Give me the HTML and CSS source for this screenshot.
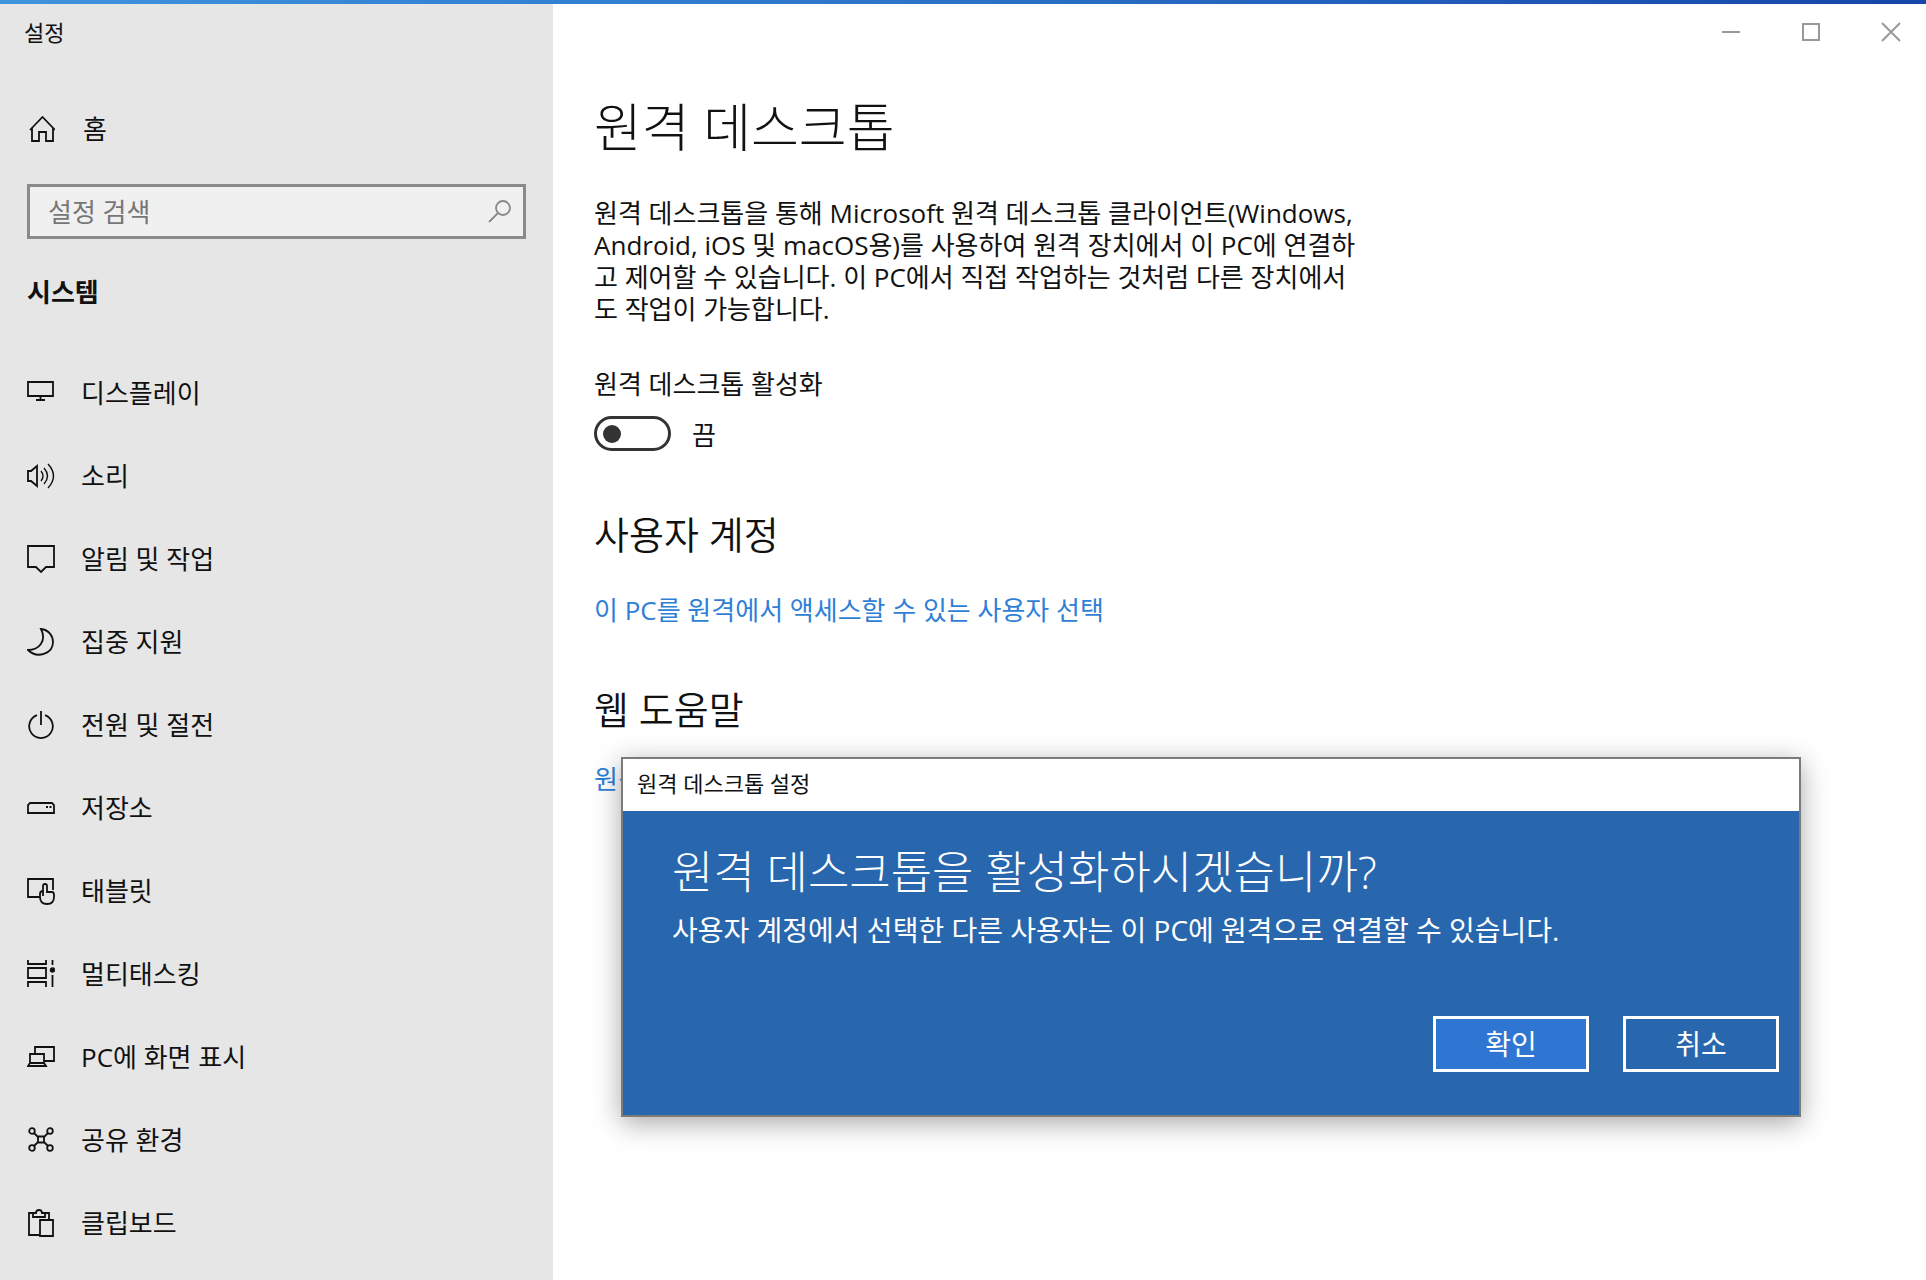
FILE: index.html
```html
<!DOCTYPE html>
<html lang="ko">
<head>
    <meta charset="UTF-8">
    <meta name="viewport" content="width=device-width, initial-scale=1.0">
    <title>설정</title>
    <link rel="stylesheet" href="styles.css">
</head>
<body>
    <div class="accent-strip"></div>
    <div class="window">
        <aside class="sidebar">
            <div class="window-title">설정</div>

            <div class="sidebar-body">
                <a href="#" class="home-link">
                    <svg class="icon" viewBox="0 0 28 28"><path d="M3 15L15.500 2L28 15M5 13V26H12V17H19V26H26V13"/></svg>
                    홈
                </a>

                <form class="search-box">
                    <input type="text" class="search-input" placeholder="설정 검색" aria-label="설정 검색">
                    <button type="button" class="search-btn" aria-label="검색">
                        <svg class="icon" viewBox="0 0 28 28"><circle cx="18" cy="10" r="7"/><path d="M13 15L4 24"/></svg>
                    </button>
                </form>

                <h2 class="sidebar-heading">시스템</h2>

                <nav class="nav">
                    <a href="#" class="nav-item">
                        <svg class="icon" viewBox="0 0 28 28"><path d="M1 3H26V17H1ZM13.500 17V21M9 21H18"/></svg>
                        디스플레이
                    </a>
                    <a href="#" class="nav-item">
                        <svg class="icon" viewBox="0 0 28 28"><path d="M1 9H4L10 4V24L4 19H1Z"/><path class="thin" d="M14 9Q18 14 14 19M17 6Q24 14 17 22M21 2Q32 14 21 26"/></svg>
                        소리
                    </a>
                    <a href="#" class="nav-item">
                        <svg class="icon" viewBox="0 0 28 28"><path d="M1 1H27V22H19L14 27L9 22H1Z"/></svg>
                        알림 및 작업
                    </a>
                    <a href="#" class="nav-item">
                        <svg class="icon" viewBox="0 0 28 28"><path d="M14 1C22 2 26 8 26 14C26 26 10 31 1 22C12 22 20 13 14 1Z"/></svg>
                        집중 지원
                    </a>
                    <a href="#" class="nav-item">
                        <svg class="icon" viewBox="0 0 28 28"><path d="M10 4.200A11.800 11.800 0 1 0 18 4.200M14 0V14"/></svg>
                        전원 및 절전
                    </a>
                    <a href="#" class="nav-item">
                        <svg class="icon" viewBox="0 0 28 28"><path d="M1 19V11L3 9H25L27 11V19Z"/><path d="M19 13H21M22.500 13H24.500"/></svg>
                        저장소
                    </a>
                    <a href="#" class="nav-item">
                        <svg class="icon" viewBox="0 0 28 28"><path d="M13 20H1V2H26V13"/><path d="M16 19V9Q16 7 18 7T20 9V15L25 15Q27 15 27 18V20Q27 27 20 27Q13 27 13 20V17Q13 14 16 14"/></svg>
                        태블릿
                    </a>
                    <a href="#" class="nav-item">
                        <svg class="icon" viewBox="0 0 28 28"><path d="M1 0V4H19V0M1 8H19V18H1ZM1 27V22H19V27M25.500 0V5M25.500 15V27"/><circle class="solid" cx="25.500" cy="10" r="1.800"/></svg>
                        멀티태스킹
                    </a>
                    <a href="#" class="nav-item">
                        <svg class="icon" viewBox="0 0 28 28"><path d="M8 11V4H27V18H17M3 11H17V20H3ZM3 20H17L19 23H1Z"/></svg>
                        PC에 화면 표시
                    </a>
                    <a href="#" class="nav-item">
                        <svg class="icon" viewBox="0 0 28 28"><circle cx="5" cy="5" r="2.800"/><circle cx="23" cy="5" r="2.800"/><circle cx="5" cy="22" r="2.800"/><circle cx="23" cy="22" r="2.800"/><path d="M11 10.500H17V16.500H11ZM7 7L11 11M21 7L17 11M7 20L11 16M21 20L17 16"/></svg>
                        공유 환경
                    </a>
                    <a href="#" class="nav-item">
                        <svg class="icon" viewBox="0 0 28 28"><path d="M13 26H2V4H8M16 4H22V10M6 4V8H18V4H15Q15 1 12 1T9 4H6M13 11H26V27H13Z"/></svg>
                        클립보드
                    </a>
                </nav>
            </div>
        </aside>

        <main class="content">
            <div class="window-controls">
                <button type="button" class="control-btn" aria-label="최소화">
                    <svg viewBox="0 0 20 20"><path d="M1 10H19"/></svg>
                </button>
                <button type="button" class="control-btn" aria-label="최대화">
                    <svg viewBox="0 0 20 20"><path d="M2 2H18V18H2Z"/></svg>
                </button>
                <button type="button" class="control-btn" aria-label="닫기">
                    <svg viewBox="0 0 20 20"><path d="M1 1L19 19M19 1L1 19"/></svg>
                </button>
            </div>

            <h1 class="page-title">원격 데스크톱</h1>
            <p class="description">
                원격 데스크톱을 통해 Microsoft 원격 데스크톱 클라이언트(Windows,<br>
                Android, iOS 및 macOS용)를 사용하여 원격 장치에서 이 PC에 연결하<br>
                고 제어할 수 있습니다. 이 PC에서 직접 작업하는 것처럼 다른 장치에서<br>
                도 작업이 가능합니다.
            </p>

            <label class="toggle-label" for="remote-toggle">원격 데스크톱 활성화</label>
            <div class="toggle-row">
                <input type="checkbox" class="toggle" id="remote-toggle">
                <span class="toggle-state">끔</span>
            </div>

            <h2 class="section-title">사용자 계정</h2>
            <a href="#" class="text-link">이 PC를 원격에서 액세스할 수 있는 사용자 선택</a>

            <h2 class="section-title help-title">웹 도움말</h2>
            <a href="#" class="text-link">원격 데스크톱 설정</a>

            <div class="dialog" role="dialog" aria-labelledby="dialog-heading">
                <div class="dialog-bar">원격 데스크톱 설정</div>
                <div class="dialog-body">
                    <h2 class="dialog-heading" id="dialog-heading">원격 데스크톱을 활성화하시겠습니까?</h2>
                    <p class="dialog-text">사용자 계정에서 선택한 다른 사용자는 이 PC에 원격으로 연결할 수 있습니다.</p>
                    <div class="dialog-actions">
                        <button type="button" class="btn btn-primary">확인</button>
                        <button type="button" class="btn">취소</button>
                    </div>
                </div>
            </div>
        </main>
    </div>
</body>
</html>
```
FILE: styles.css
```css
* {
    box-sizing: border-box;
}
body {
    margin: 0;
    min-height: 100vh;
    display: flex;
    flex-direction: column;
    background-color: #fff;
    color: #111;
    font-family: "Open Sans", "Noto Sans CJK KR", sans-serif;
    font-size: 26px;
    line-height: 32px;
}
h1, h2, p {
    margin: 0;
}
a {
    text-decoration: none;
}
button, input {
    font-family: inherit;
    font-size: inherit;
}
.accent-strip {
    height: 4px;
    background: linear-gradient(to right, #3f94de, #2b72c8 50%, #1546a8);
}
.window {
    flex: 1;
    display: grid;
    grid-template-columns: 553px 1fr;
}

/* Sidebar */
.sidebar {
    background-color: #e6e6e6;
}
.window-title {
    height: 58px;
    padding: 0 24px;
    line-height: 56px;
    font-size: 22px;
}
.sidebar-body {
    padding: 0 27px;
}
.icon {
    width: 28px;
    height: 28px;
    flex: none;
    fill: none;
    stroke: currentColor;
    stroke-width: 1.8;
}
.icon .thin {
    stroke-width: 1.4;
}
.icon .solid {
    fill: currentColor;
}
.home-link {
    display: flex;
    align-items: center;
    gap: 28px;
    height: 50px;
    margin-top: 42px;
    color: inherit;
}
.search-box {
    display: flex;
    align-items: center;
    height: 55px;
    margin-top: 30px;
    border: 3px solid #8a8a8a;
    background-color: #f0f0f0;
}
.search-input {
    flex: 1;
    min-width: 0;
    padding: 0 18px;
    border: none;
    outline: none;
    background: none;
}
.search-input::placeholder {
    color: #777;
    opacity: 1;
}
.search-btn {
    display: flex;
    padding: 0 10px;
    border: none;
    background: none;
    color: #888;
}
.sidebar-heading {
    margin-top: 33px;
    font-size: 26px;
    line-height: 40px;
}
.nav {
    margin-top: 39px;
}
.nav-item {
    display: flex;
    align-items: center;
    gap: 26px;
    height: 83px;
    color: inherit;
}

/* Content */
.content {
    position: relative;
    padding-left: 41px;
}
.window-controls {
    display: flex;
    justify-content: flex-end;
    gap: 10px;
    height: 56px;
}
.control-btn {
    display: flex;
    align-items: center;
    justify-content: center;
    width: 70px;
    padding: 0;
    border: none;
    background: none;
}
.control-btn svg {
    width: 20px;
    height: 20px;
    fill: none;
    stroke: #999;
    stroke-width: 2;
}
.page-title {
    margin-top: 35px;
    font-size: 52px;
    font-weight: 300;
    line-height: 64px;
}
.description {
    margin-top: 38px;
}
.toggle-label {
    display: block;
    margin-top: 43px;
}
.toggle-row {
    display: flex;
    align-items: center;
    gap: 21px;
    height: 35px;
    margin-top: 16px;
}
.toggle {
    display: flex;
    align-items: center;
    appearance: none;
    width: 77px;
    height: 35px;
    margin: 0;
    padding: 0 6px;
    border: 3px solid #333;
    border-radius: 18px;
}
.toggle::before {
    content: "";
    width: 18px;
    height: 18px;
    border-radius: 50%;
    background-color: #333;
}
.toggle-state {
    align-self: flex-end;
}
.section-title {
    margin-top: 59px;
    margin-bottom: 36px;
    font-size: 38px;
    font-weight: 350;
    line-height: 48px;
}
.help-title {
    margin-bottom: 30px;
}
.text-link {
    display: block;
    color: #2f7fd6;
}

/* Confirmation dialog */
.dialog {
    position: absolute;
    top: 753px;
    left: 68px;
    right: 125px;
    border: 2px solid #7b7b7b;
    background-color: #2867ae;
    color: #fff;
    box-shadow: 0 6px 26px rgba(0, 0, 0, 0.35);
}
.dialog-bar {
    height: 52px;
    padding-left: 14px;
    background-color: #fff;
    color: #111;
    font-size: 22px;
    line-height: 48px;
}
.dialog-body {
    padding: 33px 20px 43px 49px;
}
.dialog-heading {
    font-size: 45px;
    font-weight: 300;
    line-height: 56px;
}
.dialog-text {
    margin-top: 14px;
    font-size: 28px;
}
.dialog-actions {
    display: flex;
    justify-content: flex-end;
    gap: 34px;
    margin-top: 70px;
}
.btn {
    width: 156px;
    height: 56px;
    border: 3px solid #fff;
    background-color: transparent;
    color: #fff;
    font-size: 28px;
    line-height: 32px;
}
.btn-primary {
    background-color: #2e76d2;
}
```
